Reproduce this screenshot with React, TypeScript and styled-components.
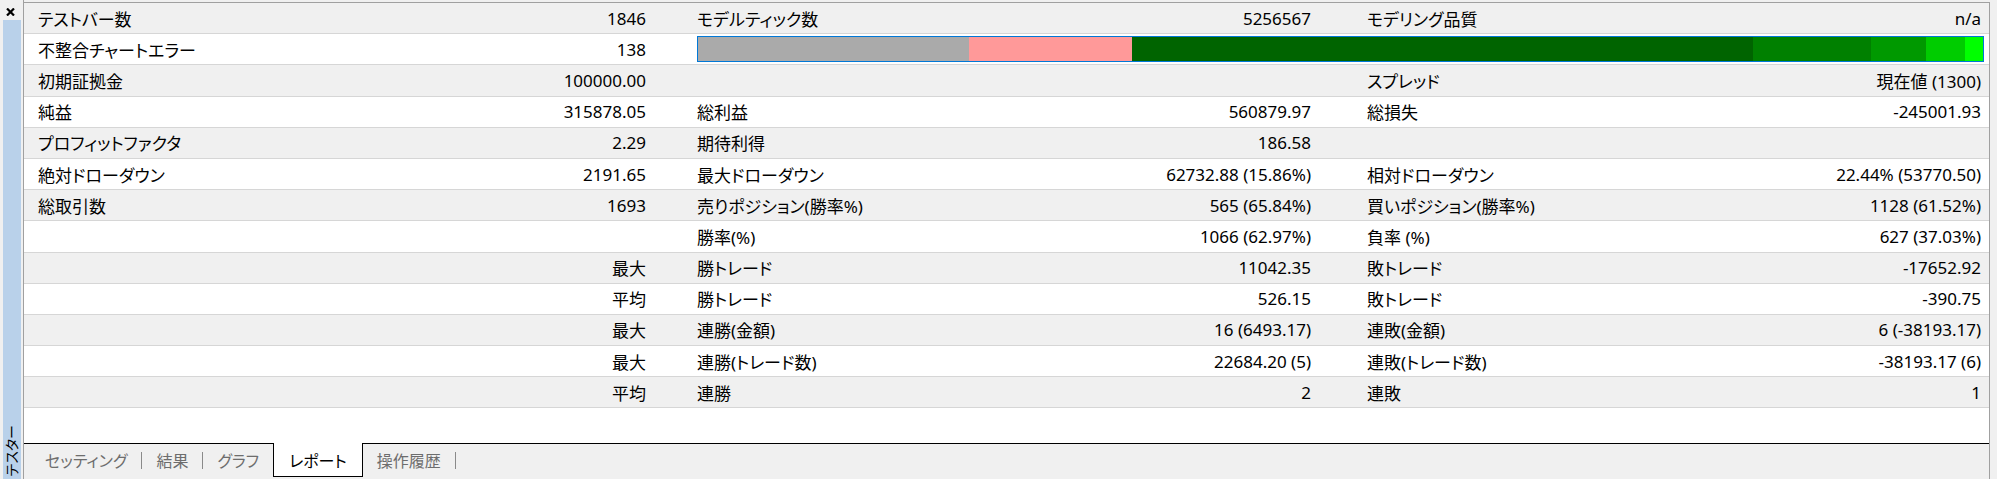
import styled, { createGlobalStyle } from "styled-components";

const GlobalStyle = createGlobalStyle`
    html, body {
        margin: 0;
        padding: 0;
        background: #f0f0f0;
    }
    body {
        width: 1997px;
        height: 479px;
        overflow: hidden;
        font-family: "Noto Sans", "Noto Sans CJK JP", sans-serif;
    }
`;

const Window = styled.div`
    display: flex;
    width: 1997px;
    height: 479px;
    background: #f0f0f0;
`;

const SideBar = styled.div`
    width: 23px;
    border-right: 1px solid #a0a0a0;
    display: flex;
    flex-direction: column;
`;

const CloseBox = styled.div`
    height: 20px;
    display: flex;
    align-items: flex-start;
    padding: 8px 0 0 6px;
    box-sizing: border-box;
`;

const SideStrip = styled.div`
    flex: 1;
    margin: 0 2px 0 3px;
    background: #b9d1ea;
    display: flex;
    flex-direction: column;
    justify-content: flex-end;
    align-items: center;
    padding-bottom: 3px;
`;

const SideTitle = styled.span`
    writing-mode: vertical-rl;
    text-orientation: sideways;
    transform: rotate(180deg);
    font-size: 14px;
    line-height: 18px;
    color: #000;
    font-feature-settings: "palt";
`;

const Main = styled.div`
    width: 1965px;
    margin-top: 2px;
    border-top: 1px solid #a0a0a0;
    border-right: 1px solid #a0a0a0;
    display: flex;
    flex-direction: column;
`;

const Report = styled.div`
    flex: 1;
    background: #fff;
`;

const Row = styled.div<{ $alt: boolean }>`
    display: grid;
    grid-template-columns: 14px 362px 246px 51px 403px 211px 56px 333px 281px 8px;
    align-items: center;
    height: 31.2px;
    box-sizing: border-box;
    border-bottom: 1px solid #d6d6d6;
    background: ${props => (props.$alt ? "#f0f0f0" : "#fff")};
    font-size: 17px;
    color: #000;
`;

const Label = styled.div<{ $col: number }>`
    grid-column: ${props => props.$col};
    white-space: nowrap;
    font-feature-settings: "palt";
`;

const Value = styled.div<{ $col: number }>`
    grid-column: ${props => props.$col};
    white-space: nowrap;
    text-align: right;
    font-feature-settings: "palt";
`;

const Bar = styled.div`
    grid-column: 5 / 11;
    margin-right: 5px;
    height: 26px;
    box-sizing: border-box;
    border: 1px solid #0078d7;
    display: flex;
`;

const Segment = styled.div<{ $color: string; $weight: number }>`
    flex: ${props => props.$weight} 0 0;
    background: ${props => props.$color};
`;

const TabBar = styled.div`
    height: 36px;
    box-sizing: border-box;
    border-top: 1px solid #000;
    display: flex;
    align-items: flex-start;
    padding-left: 7px;
    font-size: 16px;
    font-feature-settings: "palt";
`;

const Tab = styled.div<{ $active?: boolean }>`
    height: ${props => (props.$active ? "33px" : "31px")};
    margin-top: ${props => (props.$active ? "-1px" : "0")};
    padding: 0 ${props => (props.$active ? "15px" : "14px")};
    display: flex;
    align-items: center;
    color: ${props => (props.$active ? "#000" : "#6d6d6d")};
    background: ${props => (props.$active ? "#fff" : "transparent")};
    border: ${props => (props.$active ? "1px solid #000" : "none")};
    border-top: none;
    white-space: nowrap;
`;

const TabSep = styled.div`
    width: 1px;
    height: 17px;
    margin-top: 8px;
    background: #8a8a8a;
`;

type Pair = [string, string] | null;

const rows: Pair[][] = [
    [["テストバー数", "1846"], ["モデルティック数", "5256567"], ["モデリング品質", "n/a"]],
    [["不整合チャートエラー", "138"], null, null],
    [["初期証拠金", "100000.00"], null, ["スプレッド", "現在値 (1300)"]],
    [["純益", "315878.05"], ["総利益", "560879.97"], ["総損失", "-245001.93"]],
    [["プロフィットファクタ", "2.29"], ["期待利得", "186.58"], null],
    [["絶対ドローダウン", "2191.65"], ["最大ドローダウン", "62732.88 (15.86%)"], ["相対ドローダウン", "22.44% (53770.50)"]],
    [["総取引数", "1693"], ["売りポジション(勝率%)", "565 (65.84%)"], ["買いポジション(勝率%)", "1128 (61.52%)"]],
    [null, ["勝率(%)", "1066 (62.97%)"], ["負率 (%)", "627 (37.03%)"]],
    [["", "最大"], ["勝トレード", "11042.35"], ["敗トレード", "-17652.92"]],
    [["", "平均"], ["勝トレード", "526.15"], ["敗トレード", "-390.75"]],
    [["", "最大"], ["連勝(金額)", "16 (6493.17)"], ["連敗(金額)", "6 (-38193.17)"]],
    [["", "最大"], ["連勝(トレード数)", "22684.20 (5)"], ["連敗(トレード数)", "-38193.17 (6)"]],
    [["", "平均"], ["連勝", "2"], ["連敗", "1"]],
];

// モデリング品質バー
const segments = [
    { color: "#aaaaaa", weight: 271 },
    { color: "#ff9999", weight: 163 },
    { color: "#006400", weight: 621 },
    { color: "#008000", weight: 118 },
    { color: "#009900", weight: 55 },
    { color: "#00cc00", weight: 39 },
    { color: "#00ff00", weight: 18 },
];

const tabs = [
    { name: "セッティング", sep: true },
    { name: "結果", sep: true },
    { name: "グラフ", sep: false },
    { name: "レポート", active: true, sep: false },
    { name: "操作履歴", sep: true },
];

function App() {
    return (
        <>
            <GlobalStyle />
            <Window>
                <SideBar>
                    <CloseBox>
                        <svg width="9" height="8" viewBox="0 0 9 8">
                            <path d="M1 0.5 L8 7.5 M8 0.5 L1 7.5" stroke="#000" strokeWidth="2.2" />
                        </svg>
                    </CloseBox>
                    <SideStrip>
                        <SideTitle>テスター</SideTitle>
                    </SideStrip>
                </SideBar>
                <Main>
                    <Report>
                        {rows.map((row, i) => (
                            <Row key={i} $alt={i % 2 === 0}>
                                {row.map((pair, g) =>
                                    pair ? (
                                        [
                                            <Label key={`l${g}`} $col={2 + g * 3}>
                                                {pair[0]}
                                            </Label>,
                                            <Value key={`v${g}`} $col={3 + g * 3}>
                                                {pair[1]}
                                            </Value>,
                                        ]
                                    ) : null
                                )}
                                {i === 1 && (
                                    <Bar>
                                        {segments.map((s, k) => (
                                            <Segment key={k} $color={s.color} $weight={s.weight} />
                                        ))}
                                    </Bar>
                                )}
                            </Row>
                        ))}
                    </Report>
                    <TabBar>
                        {tabs.map(t => [
                            <Tab key={t.name} $active={t.active}>
                                {t.name}
                            </Tab>,
                            t.sep ? <TabSep key={t.name + "-sep"} /> : null,
                        ])}
                    </TabBar>
                </Main>
            </Window>
        </>
    );
}

export default App;
